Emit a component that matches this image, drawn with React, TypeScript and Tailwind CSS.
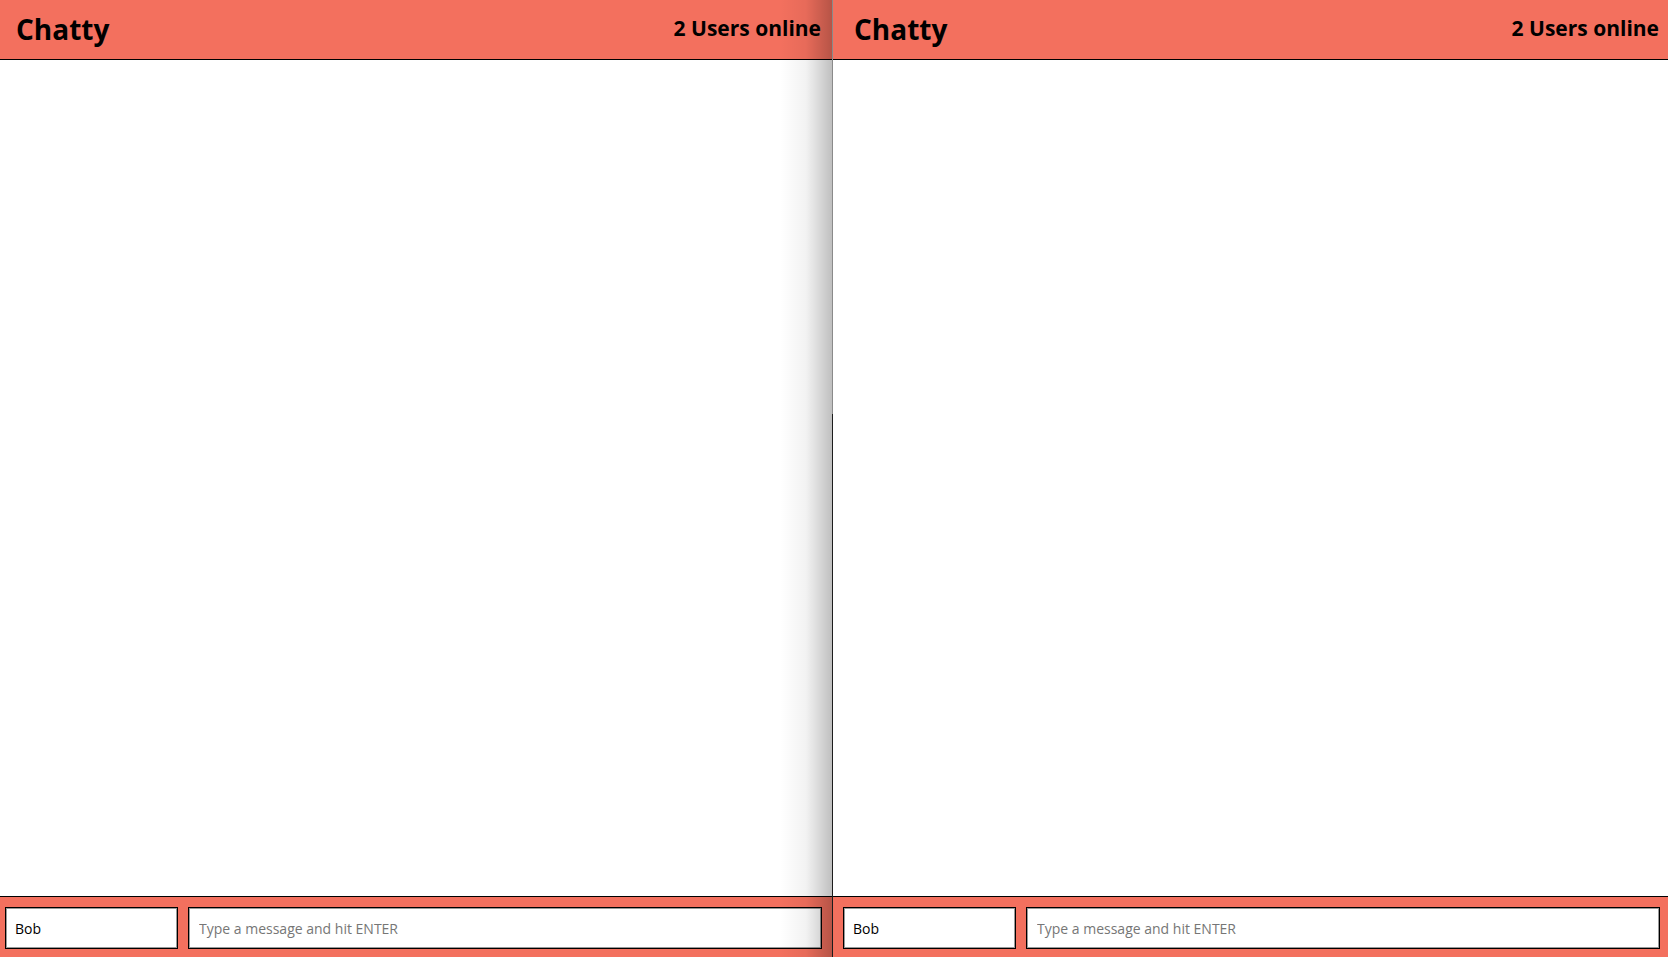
import { useState } from 'react';

type PaneProps = {
  user: string;
  online: number;
  headerPad: string;
  footerPad: string;
  shadow?: boolean;
};

function ChatPane({ user, online, headerPad, footerPad, shadow }: PaneProps) {
  const [name, setName] = useState<string>(user);
  const [message, setMessage] = useState<string>('');

  return (
    <div className="relative flex h-full flex-col bg-white">
      <nav className={`flex h-[60px] shrink-0 items-center justify-between border-b border-black bg-[#f3705e] ${headerPad}`}>
        <span className="pb-[1px] text-[28px] font-bold leading-none text-black">Chatty</span>
        <span className="pb-[2px] text-[21px] font-bold leading-none text-black">{online} Users online</span>
      </nav>

      <main className="flex-1">{/* messages go here */}</main>

      <footer className={`flex h-[61px] shrink-0 items-start gap-[10px] border-t border-black bg-[#f3705e] pt-[10px] ${footerPad}`}>
        <input
          value={name}
          onChange={(e) => setName(e.target.value)}
          className="h-[42px] w-[173px] shrink-0 border border-black bg-white px-[9px] text-[14px] text-black shadow-[inset_0_0_0_1px_rgba(0,0,0,0.4)] outline-none"
        />
        <input
          value={message}
          onChange={(e) => setMessage(e.target.value)}
          placeholder="Type a message and hit ENTER"
          className="h-[42px] flex-1 border border-black bg-white px-[10px] text-[14px] text-black shadow-[inset_0_0_0_1px_rgba(0,0,0,0.4)] outline-none placeholder:text-[#767676]"
        />
      </footer>

      {shadow && (
        <div className="pointer-events-none absolute inset-y-0 right-0 w-[52px] bg-gradient-to-r from-transparent via-black/5 to-black/25" />
      )}
    </div>
  );
}

export default function App() {
  return (
    <div className="flex h-[957px] w-[1668px] overflow-hidden bg-white" style={{ fontFamily: '"Open Sans", "Noto Sans", sans-serif' }}>
      <div className="h-full w-[832px] shrink-0">
        <ChatPane user="Bob" online={2} headerPad="pl-[16px] pr-[11px]" footerPad="pl-[5px] pr-[10px]" shadow />
      </div>
      <div className="flex h-full w-[1px] shrink-0 flex-col">
        <div className="h-[414px] bg-[#8a8a8a]" />
        <div className="flex-1 bg-[#1c1c1c]" />
      </div>
      <div className="h-full flex-1">
        <ChatPane user="Bob" online={2} headerPad="pl-[21px] pr-[9px]" footerPad="pl-[10px] pr-[8px]" />
      </div>
    </div>
  );
}
